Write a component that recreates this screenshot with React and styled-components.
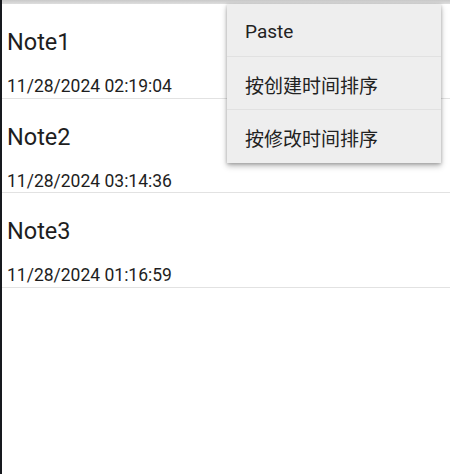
import React from "react";
import styled, { createGlobalStyle } from "styled-components";

const GlobalStyle = createGlobalStyle`
  html, body {
    margin: 0;
    padding: 0;
    background: #ffffff;
  }
  body {
    font-family: Roboto, "Noto Sans CJK SC", "Liberation Sans", sans-serif;
  }
`;

const notes = [
  { title: "Note1", time: "11/28/2024 02:19:04" },
  { title: "Note2", time: "11/28/2024 03:14:36" },
  { title: "Note3", time: "11/28/2024 01:16:59" },
];

const menuItems = ["Paste", "按创建时间排序", "按修改时间排序"];

const App = () => {
  return (
    <Screen>
      <GlobalStyle />
      <TopStrip />
      <List>
        {notes.map((note) => (
          <Row key={note.title}>
            <Title>{note.title}</Title>
            <Time>{note.time}</Time>
          </Row>
        ))}
      </List>
      <Menu>
        {menuItems.map((item, i) => (
          <MenuItem key={item} $last={i === menuItems.length - 1}>
            {item}
          </MenuItem>
        ))}
      </Menu>
    </Screen>
  );
};

const Screen = styled.div`
  position: relative;
  width: 450px;
  height: 474px;
  box-sizing: border-box;
  border-left: 2px solid #16191e;
  background: #ffffff;
  overflow: hidden;
`;

const TopStrip = styled.div`
  height: 4px;
  background: linear-gradient(#c9c9c9, #dedede);
`;

const List = styled.div`
  display: flex;
  flex-direction: column;
`;

const Row = styled.div`
  height: 94.5px;
  box-sizing: border-box;
  display: flex;
  flex-direction: column;
  padding: 23px 0 0 5px;
  border-bottom: 1px solid #e2e2e2;
`;

const Title = styled.div`
  font-size: 23.5px;
  line-height: 30px;
  color: #1e1e1e;
`;

const Time = styled.div`
  margin-top: 19px;
  font-size: 17.5px;
  line-height: 20px;
  color: #1e1e1e;
`;

const Menu = styled.div`
  position: absolute;
  top: 4px;
  left: 225px;
  width: 214px;
  background: #eeeeee;
  box-shadow: 0 3px 6px rgba(0, 0, 0, 0.28), 0 1px 3px rgba(0, 0, 0, 0.2);
  display: flex;
  flex-direction: column;
`;

const MenuItem = styled.div`
  height: 53px;
  box-sizing: border-box;
  display: flex;
  align-items: center;
  padding: 2px 0 0 18px;
  font-size: 19px;
  color: #222222;
  border-bottom: ${(p) => (p.$last ? "none" : "1px solid #e1e1e1")};
`;

export default App;
